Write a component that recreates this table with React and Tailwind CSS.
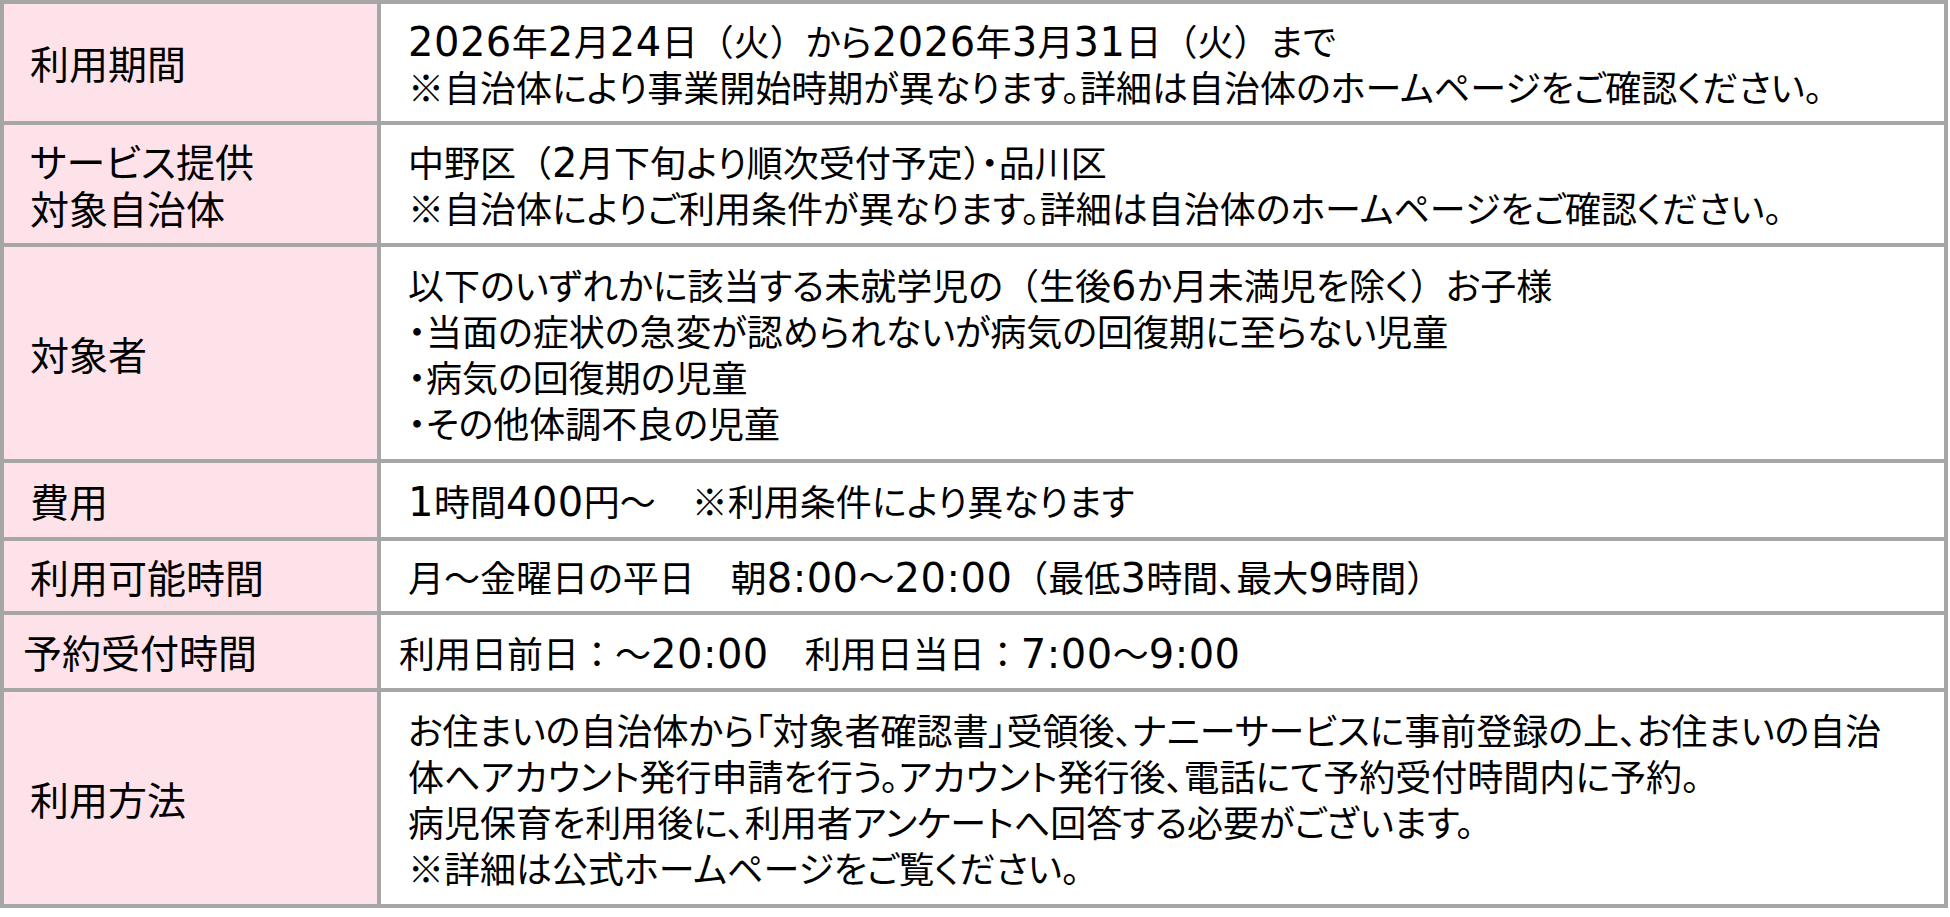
const rows = [
  {
    h: 'h-[117px]',
    label: ['利用期間'],
    lines: [
      '2026年2月24日（火）から2026年3月31日（火）まで',
      '※自治体により事業開始時期が異なります。詳細は自治体のホームページをご確認ください。',
    ],
  },
  {
    h: 'h-[118px]',
    label: ['サービス提供', '対象自治体'],
    lines: [
      '中野区（2月下旬より順次受付予定）・品川区',
      '※自治体によりご利用条件が異なります。詳細は自治体のホームページをご確認ください。',
    ],
  },
  {
    h: 'h-[212px]',
    label: ['対象者'],
    lines: [
      '以下のいずれかに該当する未就学児の（生後6か月未満児を除く）お子様',
      '・当面の症状の急変が認められないが病気の回復期に至らない児童',
      '・病気の回復期の児童',
      '・その他体調不良の児童',
    ],
  },
  {
    h: 'h-[74px]',
    label: ['費用'],
    lines: ['1時間400円～　※利用条件により異なります'],
  },
  {
    h: 'h-[70px]',
    label: ['利用可能時間'],
    lines: ['月～金曜日の平日　朝8:00～20:00（最低3時間、最大9時間）'],
  },
  {
    h: 'h-[73px]',
    label: ['予約受付時間'],
    lines: ['利用日前日：～20:00　利用日当日：7:00～9:00'],
    tight: true,
  },
  {
    h: 'h-[212px]',
    label: ['利用方法'],
    lines: [
      'お住まいの自治体から「対象者確認書」受領後、ナニーサービスに事前登録の上、お住まいの自治',
      '体へアカウント発行申請を行う。アカウント発行後、電話にて予約受付時間内に予約。',
      '病児保育を利用後に、利用者アンケートへ回答する必要がございます。',
      '※詳細は公式ホームページをご覧ください。',
    ],
  },
]

// parens/colons stay full width, digits get the wider Verdana-like face
function Line({ text }) {
  return text.split(/([（）：]|[0-9:]+)/).map((part, i) => {
    if (i % 2 === 0) return part
    if (/[0-9]/.test(part))
      return (
        <span key={i} className="font-['DejaVu_Sans'] text-[40px] leading-none tracking-[0.5px]">
          {part}
        </span>
      )
    return (
      <span key={i} className="[font-feature-settings:normal]">
        {part}
      </span>
    )
  })
}

export default function App() {
  return (
    <div className="min-h-screen bg-white font-['Noto_Sans_CJK_JP','Noto_Sans',sans-serif] text-black [font-feature-settings:'palt']">
      <div className="grid w-[1948px] grid-cols-[373px_1fr] gap-[4px] bg-[#a6a6a6] p-[4px]">
        {rows.map((row, i) => (
          <div key={i} className="contents">
            <div
              className={`${row.h} flex flex-col justify-center bg-[#fde3e9] text-[39px] leading-[47px] ${
                row.tight ? 'pl-[19px]' : 'pl-[26px]'
              }`}
            >
              {row.label.map((t) => (
                <div key={t}>{t}</div>
              ))}
            </div>
            <div
              className={`${row.h} flex flex-col justify-center bg-white text-[36px] leading-[46px] ${
                row.tight ? 'pl-[18px]' : 'pl-[27px]'
              }`}
            >
              {row.lines.map((t) => (
                <div key={t} className="whitespace-nowrap">
                  <Line text={t} />
                </div>
              ))}
            </div>
          </div>
        ))}
      </div>
    </div>
  )
}
